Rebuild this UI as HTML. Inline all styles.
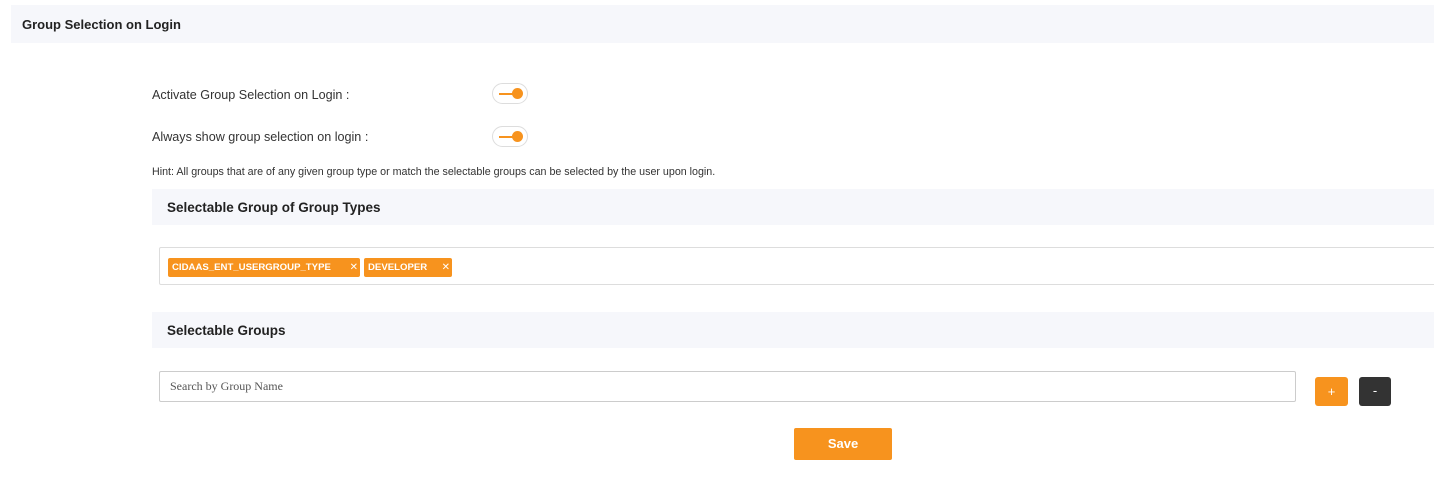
<!DOCTYPE html>
<html><head><style>
body{margin:0;background:#fff;font-family:"Liberation Sans",sans-serif;color:#333;width:1434px;height:487px;position:relative;overflow:hidden}
.abs{position:absolute}
.hdr{left:11px;top:5px;width:1423px;height:38px;background:#f6f7fb}
.hdr span{position:absolute;left:11px;top:12px;font-size:13px;font-weight:bold;color:#222}
.lbl{font-size:12.6px;color:#333}
.tog{width:34px;height:19px;border:1px solid #ddd;border-radius:11px;background:#fff}
.tog .ln{position:absolute;left:6px;top:9px;width:16px;height:2px;background:#f7931e}
.tog .dot{position:absolute;left:19px;top:4px;width:11px;height:11px;border-radius:50%;background:#f7931e}
.sec{left:152px;width:1282px;height:36px;background:#f6f7fb}
.sec span{position:absolute;left:15px;top:11px;font-size:13.5px;font-weight:bold;color:#222}
.chip{background:#f7931e;color:#fff;font-size:9.6px;font-weight:bold;height:19px;line-height:19px;padding-left:4px;border-radius:2px;top:258px}
</style></head><body>
<div class="abs hdr"><span>Group Selection on Login</span></div>
<div class="abs lbl" style="left:152px;top:88px">Activate Group Selection on Login :</div>
<div class="abs tog" style="left:492px;top:83px"><div class="ln"></div><div class="dot"></div></div>
<div class="abs lbl" style="left:152px;top:130px">Always show group selection on login :</div>
<div class="abs tog" style="left:492px;top:126px"><div class="ln"></div><div class="dot"></div></div>
<div class="abs" style="left:152px;top:166px;font-size:10.7px;color:#333">Hint: All groups that are of any given group type or match the selectable groups can be selected by the user upon login.</div>
<div class="abs sec" style="top:189px"><span>Selectable Group of Group Types</span></div>
<div class="abs" style="left:159px;top:247px;width:1280px;height:36px;border:1px solid #ddd;border-radius:2px"></div>
<div class="abs chip" style="left:168px;width:188px">CIDAAS_ENT_USERGROUP_TYPE<span style="position:absolute;right:2px;font-weight:normal;font-size:10px">✕</span></div>
<div class="abs chip" style="left:364px;width:84px">DEVELOPER<span style="position:absolute;right:2px;font-weight:normal;font-size:10px">✕</span></div>
<div class="abs sec" style="top:312px"><span>Selectable Groups</span></div>
<div class="abs" style="left:159px;top:371px;width:1135px;height:29px;border:1px solid #ccc;border-radius:2px"><span style="position:absolute;left:10px;top:7px;font-family:'Liberation Serif',serif;font-size:12px;color:#555">Search by Group Name</span></div>
<div class="abs" style="left:1315px;top:377px;width:33px;height:29px;background:#f7931e;border-radius:3px;color:#fff;text-align:center;line-height:29px;font-size:13px">+</div>
<div class="abs" style="left:1359px;top:377px;width:32px;height:29px;background:#333;border-radius:3px;color:#fff;text-align:center;line-height:28px;font-size:13px">-</div>
<div class="abs" style="left:794px;top:428px;width:98px;height:32px;background:#f7931e;border-radius:2px;color:#fff;text-align:center;line-height:32px;font-size:13px;font-weight:bold">Save</div>
</body></html>
